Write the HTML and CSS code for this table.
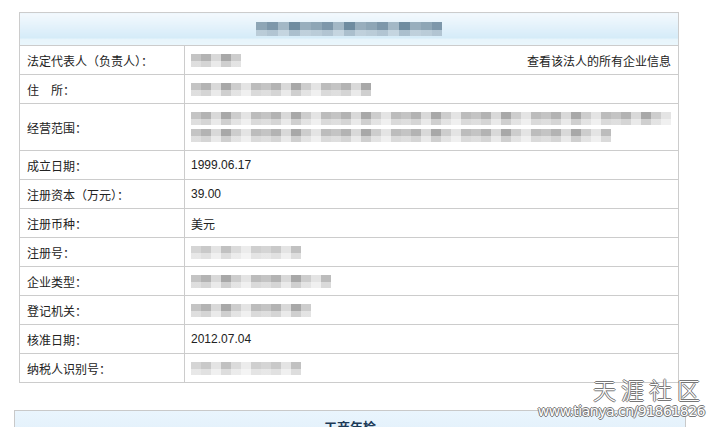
FILE: index.html
```html
<!DOCTYPE html>
<html lang="zh-CN">
<head>
  <meta charset="UTF-8">
  <meta name="viewport" content="width=device-width, initial-scale=1.0">
  <title>企业登记信息</title>
  <link rel="stylesheet" href="styles.css">
</head>
<body>
  <div class="page">
    <table class="info">
      <tr>
        <th colspan="2" class="caption"><span class="mosaic head" style="width:186px"></span></th>
      </tr>
      <tr>
        <td class="label">法定代表人（负责人）：</td>
        <td class="value">
          <div class="split">
            <span class="mosaic" style="width:50px"></span>
            <a class="link">查看该法人的所有企业信息</a>
          </div>
        </td>
      </tr>
      <tr>
        <td class="label">住　所：</td>
        <td class="value"><span class="mosaic" style="width:180px"></span></td>
      </tr>
      <tr class="tall">
        <td class="label">经营范围：</td>
        <td class="value">
          <span class="mosaic wide" style="width:480px"></span>
          <span class="mosaic wide" style="width:420px"></span>
        </td>
      </tr>
      <tr>
        <td class="label">成立日期：</td>
        <td class="value">1999.06.17</td>
      </tr>
      <tr>
        <td class="label">注册资本（万元）：</td>
        <td class="value">39.00</td>
      </tr>
      <tr>
        <td class="label">注册币种：</td>
        <td class="value">美元</td>
      </tr>
      <tr>
        <td class="label">注册号：</td>
        <td class="value"><span class="mosaic light" style="width:110px"></span></td>
      </tr>
      <tr>
        <td class="label">企业类型：</td>
        <td class="value"><span class="mosaic" style="width:140px"></span></td>
      </tr>
      <tr>
        <td class="label">登记机关：</td>
        <td class="value"><span class="mosaic" style="width:120px"></span></td>
      </tr>
      <tr>
        <td class="label">核准日期：</td>
        <td class="value">2012.07.04</td>
      </tr>
      <tr>
        <td class="label">纳税人识别号：</td>
        <td class="value"><span class="mosaic light" style="width:110px"></span></td>
      </tr>
    </table>

    <div class="section">
      <h2>工商年检</h2>
    </div>

    <!-- forum watermark -->
    <div class="watermark">
      <div class="wm-name">天涯社区</div>
      <div class="wm-url">www.tianya.cn/91861826</div>
    </div>
  </div>
</body>
</html>
```

FILE: styles.css
```css
body {
  margin: 0;
  background-color: #ffffff;
  font-family: "Liberation Sans", Arial, "Noto Sans CJK SC", sans-serif;
  font-size: 12px;
  color: #222;
}

.page {
  position: relative;
  width: 711px;
  height: 427px;
  overflow: hidden;
  padding-top: 12px;
  box-sizing: border-box;
}

.info {
  margin-left: 19px;
  width: 660px;
  border-collapse: collapse;
  border: 1px solid #c9c9c9;
}

.info td,
.info th {
  border: 1px solid #cccccc;
  padding: 0 7px;
  height: 29px;
  box-sizing: border-box;
}

.info th.caption {
  height: 33px;
  text-align: center;
  background: linear-gradient(#f3f9fd, #d4ebf8 78%, #e8f5fb 80%, #eaf6fc);
}

.label {
  width: 165px;
}

.info td.value {
  padding-left: 6px;
}

.info .tall td {
  height: 47px;
}

.split {
  display: flex;
  justify-content: space-between;
  align-items: center;
}

.link {
  color: #222;
  cursor: pointer;
}

/* pixelated (blurred out) values */
.mosaic {
  display: inline-block;
  height: 13px;
  vertical-align: middle;
  background:
    linear-gradient(to bottom, rgba(255,255,255,0) 55%, rgba(255,255,255,.45) 55%),
    repeating-linear-gradient(90deg, #c4c4c4 0 10px, #b3b3b3 10px 20px, #d9d9d9 20px 30px, #a8a8a8 30px 40px, #cdcdcd 40px 50px, #e4e4e4 50px 60px, #bcbcbc 60px 70px);
  filter: blur(0.5px);
}

.mosaic.light {
  opacity: .7;
}

.mosaic.wide {
  display: block;
  margin: 4px 0;
}

.mosaic.head {
  height: 14px;
  background:
    linear-gradient(to bottom, rgba(255,255,255,0) 60%, rgba(230,242,250,.5) 60%),
    repeating-linear-gradient(90deg, #8ea6b6 0 11px, #7d97aa 11px 22px, #a3b8c6 22px 33px, #6f8ca0 33px 44px, #98aebd 44px 55px);
}

.section {
  margin: 27px 0 0 14px;
  width: 670px;
  height: 40px;
  border: 1px solid #c9c9c9;
  background: linear-gradient(#eaf5fd, #dcedf9);
}

.section h2 {
  margin: 0;
  padding-top: 6px;
  text-align: center;
  font-size: 13px;
  color: #1d3a57;
}

.watermark {
  position: absolute;
  right: 6px;
  top: 375px;
  text-align: right;
  color: #ffffff;
  text-shadow: 1px 0 #777, -1px 0 #777, 0 1px #777, 0 -1px #777;
}

.wm-name {
  font-family: "Noto Sans CJK SC", sans-serif;
  font-size: 23px;
  letter-spacing: 5px;
  line-height: 28px;
  height: 28px;
  font-weight: 300;
}

.wm-url {
  font-family: "DejaVu Sans", sans-serif;
  font-size: 14px;
  line-height: 16px;
  letter-spacing: -0.5px;
}
```
